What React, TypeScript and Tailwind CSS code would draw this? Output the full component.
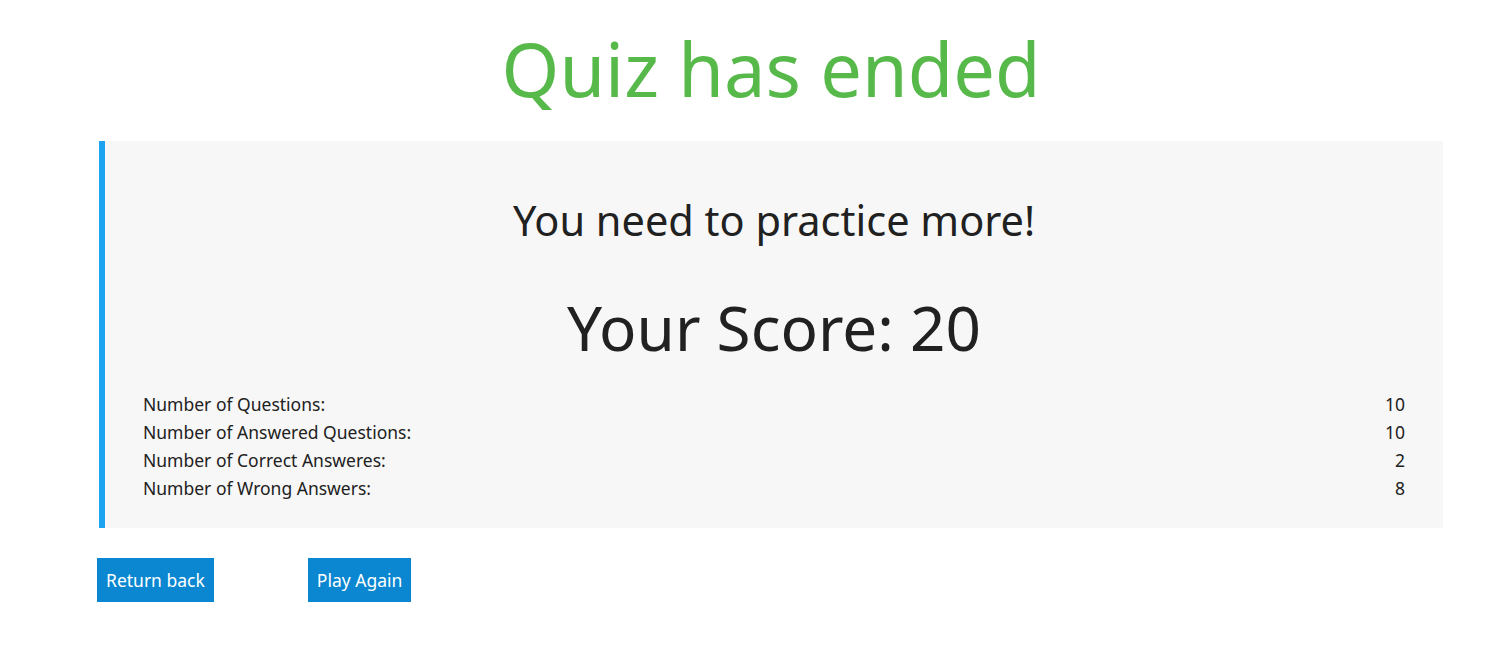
const stats = [
  { label: "Number of Questions:", value: 10 },
  { label: "Number of Answered Questions:", value: 10 },
  { label: "Number of Correct Answeres:", value: 2 },
  { label: "Number of Wrong Answers:", value: 8 },
];

export default function App() {
  return (
    <div className="min-h-[665px] bg-white font-['Noto_Sans',sans-serif] text-[#212121]">
      <div className="ml-[99px] w-[1344px]">
        <h1 className="pt-[20px] text-center text-[74px] leading-[98px] text-[#56b949]">
          Quiz has ended
        </h1>
        <div className="mt-[23px] border-l-[6px] border-[#1da1f2] bg-[#f7f7f7] px-[38px] pt-[49px] pb-[26px]">
          <h2 className="text-center text-[41.5px] leading-[60px]">
            You need to practice more!
          </h2>
          <h3 className="mt-[37px] text-center text-[62px] leading-[80px]">
            Your Score: 20
          </h3>
          <div className="mt-[23px]">
            {stats.map((s) => (
              <div
                key={s.label}
                className="flex justify-between text-[17.5px] leading-[28px]"
              >
                <span>{s.label}</span>
                <span>{s.value}</span>
              </div>
            ))}
          </div>
        </div>
        <div className="mt-[30px] ml-[-2px] flex gap-[94px]">
          <button className="h-[44px] bg-[#0a87d0] px-[9px] text-[17.5px] text-white">
            Return back
          </button>
          <button className="h-[44px] bg-[#0a87d0] px-[9px] text-[17.5px] text-white">
            Play Again
          </button>
        </div>
      </div>
    </div>
  );
}
